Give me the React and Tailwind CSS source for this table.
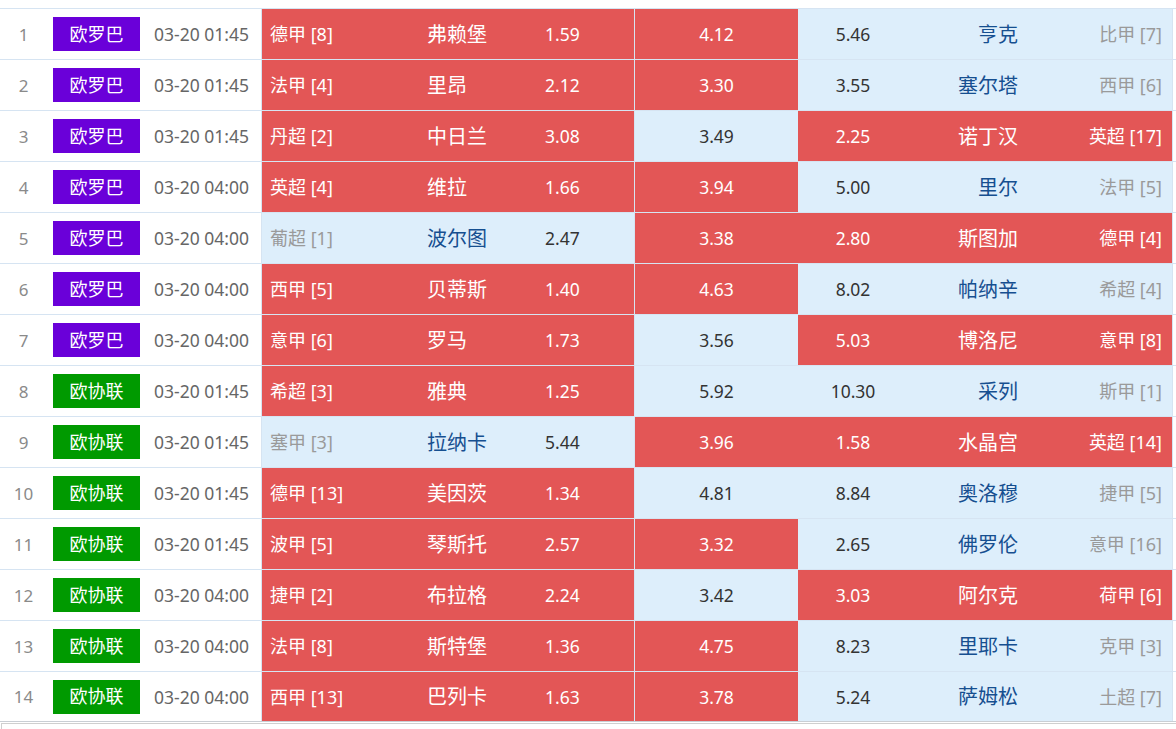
import React from "react";

const rows = [
  [1, "欧罗巴", "03-20 01:45", "德甲 [8]", "弗赖堡", "1.59", "R", "4.12", "R", "5.46", "亨克", "比甲 [7]", "B"],
  [2, "欧罗巴", "03-20 01:45", "法甲 [4]", "里昂", "2.12", "R", "3.30", "R", "3.55", "塞尔塔", "西甲 [6]", "B"],
  [3, "欧罗巴", "03-20 01:45", "丹超 [2]", "中日兰", "3.08", "R", "3.49", "B", "2.25", "诺丁汉", "英超 [17]", "R"],
  [4, "欧罗巴", "03-20 04:00", "英超 [4]", "维拉", "1.66", "R", "3.94", "R", "5.00", "里尔", "法甲 [5]", "B"],
  [5, "欧罗巴", "03-20 04:00", "葡超 [1]", "波尔图", "2.47", "B", "3.38", "R", "2.80", "斯图加", "德甲 [4]", "R"],
  [6, "欧罗巴", "03-20 04:00", "西甲 [5]", "贝蒂斯", "1.40", "R", "4.63", "R", "8.02", "帕纳辛", "希超 [4]", "B"],
  [7, "欧罗巴", "03-20 04:00", "意甲 [6]", "罗马", "1.73", "R", "3.56", "B", "5.03", "博洛尼", "意甲 [8]", "R"],
  [8, "欧协联", "03-20 01:45", "希超 [3]", "雅典", "1.25", "R", "5.92", "B", "10.30", "采列", "斯甲 [1]", "B"],
  [9, "欧协联", "03-20 01:45", "塞甲 [3]", "拉纳卡", "5.44", "B", "3.96", "R", "1.58", "水晶宫", "英超 [14]", "R"],
  [10, "欧协联", "03-20 01:45", "德甲 [13]", "美因茨", "1.34", "R", "4.81", "B", "8.84", "奥洛穆", "捷甲 [5]", "B"],
  [11, "欧协联", "03-20 01:45", "波甲 [5]", "琴斯托", "2.57", "R", "3.32", "R", "2.65", "佛罗伦", "意甲 [16]", "B"],
  [12, "欧协联", "03-20 04:00", "捷甲 [2]", "布拉格", "2.24", "R", "3.42", "B", "3.03", "阿尔克", "荷甲 [6]", "R"],
  [13, "欧协联", "03-20 04:00", "法甲 [8]", "斯特堡", "1.36", "R", "4.75", "R", "8.23", "里耶卡", "克甲 [3]", "B"],
  [14, "欧协联", "03-20 04:00", "西甲 [13]", "巴列卡", "1.63", "R", "3.78", "R", "5.24", "萨姆松", "土超 [7]", "B"],
];

const font = { fontFamily: '"Noto Sans", "Noto Sans CJK SC", sans-serif' };

function Row({ r, last }) {
  const [idx, comp, time, hl, ht, ho, hc, dr, dc, ao, at, al, ac] = r;
  const homeRed = hc === "R";
  const drawRed = dc === "R";
  const awayRed = ac === "R";
  return (
    <div
      className={`flex h-[51px] border-t border-[#d6e4f2] ${last ? "border-b border-b-[#c9ced4]" : ""}`}
    >
      <div className="w-[47px] flex items-center justify-center pt-[1px] text-[17px] text-[#8a8a8a]">{idx}</div>
      <div className="w-[99px] flex items-center justify-center">
        <div
          className={`w-[87px] h-[34px] flex items-center justify-center text-[18px] text-white ${
            comp === "欧罗巴" ? "bg-[#6a00d9]" : "bg-[#009a00]"
          }`}
        >
          {comp}
        </div>
      </div>
      <div className="w-[115px] flex items-center pl-[8px] pt-[1px] text-[17.5px] text-[#666666]">{time}</div>
      <div
        className={`w-[373px] flex items-center pt-[1px] border-l border-[#d6e4f2] ${
          homeRed ? "bg-[#e35656]" : "bg-[#ddeefb]"
        }`}
      >
        <div className={`w-[165px] pl-[8px] text-[18px] ${homeRed ? "text-white" : "text-[#9a9a9a]"}`}>{hl}</div>
        <div className={`w-[118px] text-[20px] ${homeRed ? "text-white" : "text-[#164f90]"}`}>{ht}</div>
        <div className={`w-[80px] text-[17.5px] ${homeRed ? "text-white" : "text-[#333333]"}`}>{ho}</div>
      </div>
      <div
        className={`w-[164px] flex items-center justify-center pt-[1px] border-l border-[#d6e4f2] text-[17.5px] ${
          drawRed ? "bg-[#e35656] text-white" : "bg-[#ddeefb] text-[#333333]"
        }`}
      >
        {dr}
      </div>
      <div
        className={`w-[375px] flex items-center pt-[1px] border-r border-[#d6e4f2] ${
          awayRed ? "bg-[#e35656]" : "bg-[#ddeefb]"
        }`}
      >
        <div className={`w-[110px] text-center text-[17.5px] ${awayRed ? "text-white" : "text-[#333333]"}`}>{ao}</div>
        <div className={`w-[110px] text-right text-[20px] ${awayRed ? "text-white" : "text-[#164f90]"}`}>{at}</div>
        <div className={`flex-1 text-right pr-[10px] text-[18px] ${awayRed ? "text-white" : "text-[#9a9a9a]"}`}>{al}</div>
      </div>
    </div>
  );
}

export default function App() {
  return (
    <div className="w-[1176px] h-[729px] bg-white overflow-hidden" style={font}>
      <div className="h-[8px]" />
      {rows.map((r, i) => (
        <Row key={r[0]} r={r} last={i === rows.length - 1} />
      ))}
      <div className="mt-[1px] ml-[1px] h-[10px] border-t border-l border-[#cfcfcf]" />
    </div>
  );
}
